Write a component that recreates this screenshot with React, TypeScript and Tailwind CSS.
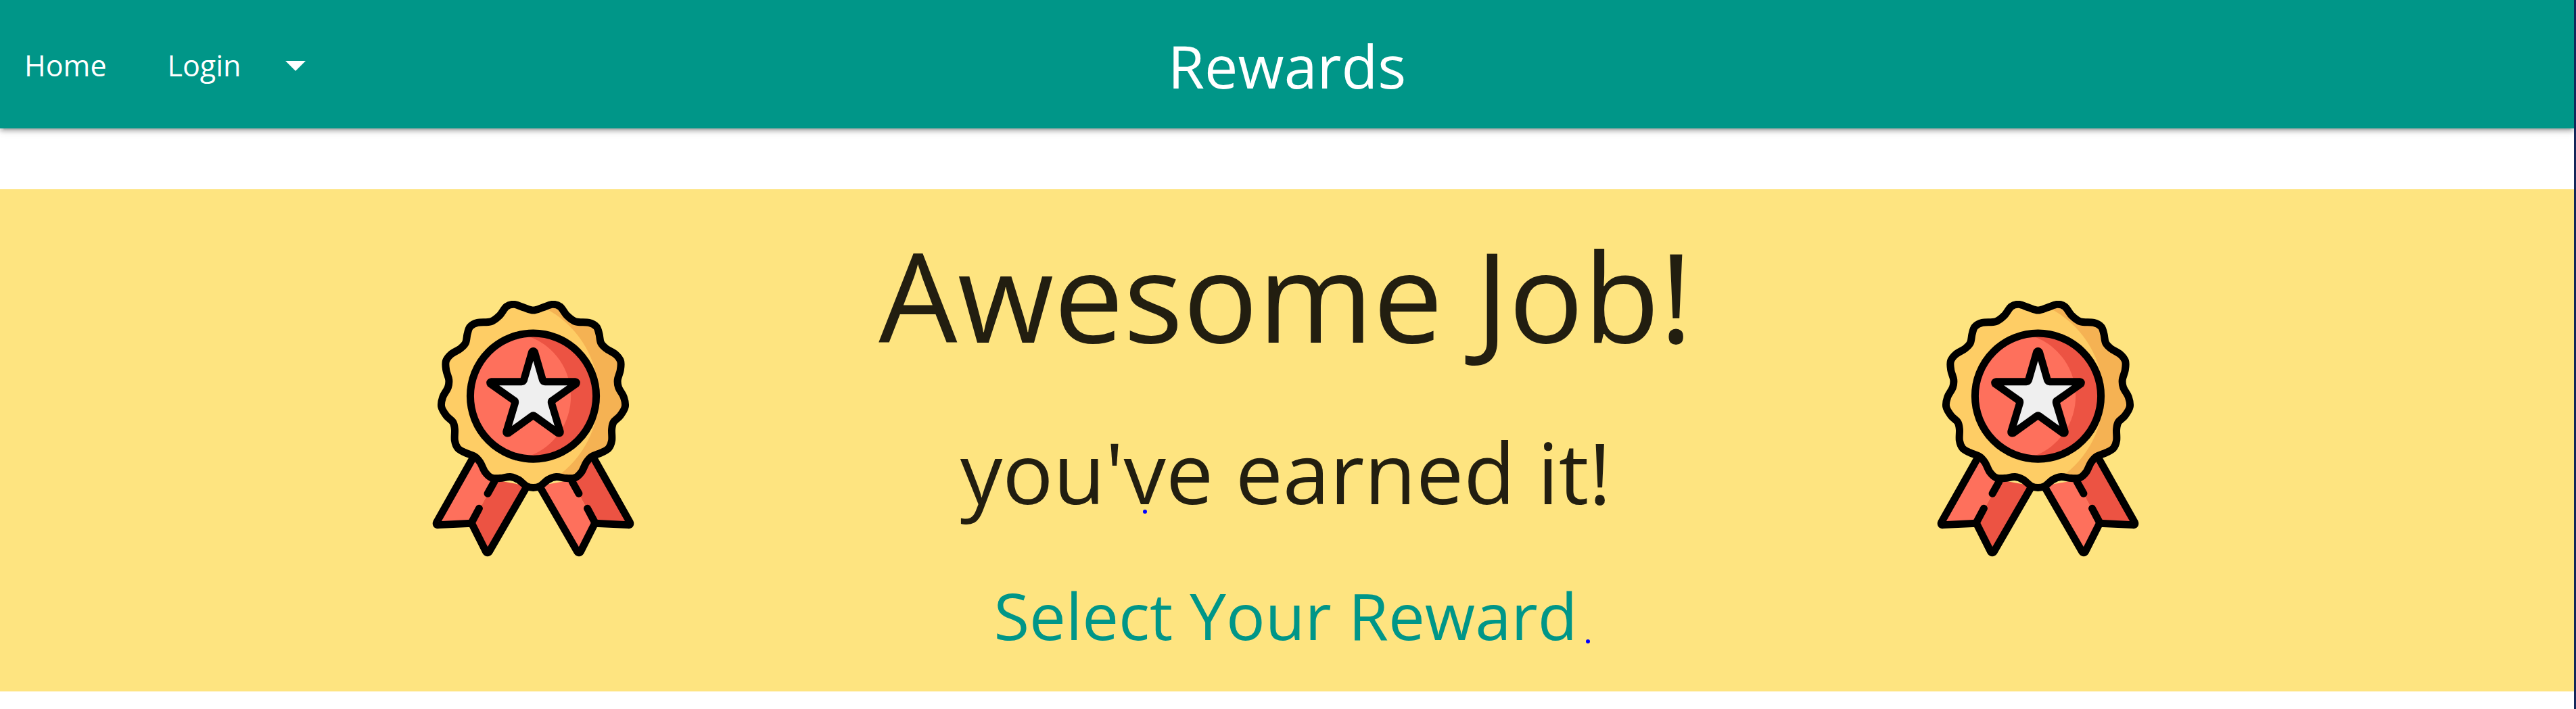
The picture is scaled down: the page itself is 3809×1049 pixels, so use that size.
type Point = [number, number];

// Right half of the rosette's scalloped edge, from top centre to bottom centre.
const edge: Point[] = [
  [503, 117], [545, 105], [588, 91], [622, 101], [652, 140], [690, 167], [750, 172], [783, 190],
  [795, 222], [803, 262], [826, 287], [868, 313], [890, 343], [889, 383], [877, 425], [881, 460],
  [904, 502], [910, 545], [888, 585], [859, 613], [851, 645], [851, 695], [837, 729], [806, 748],
  [762, 766], [738, 792], [717, 834], [688, 860], [650, 862], [605, 856], [568, 869], [533, 897],
];
const mirrored: Point[] = edge.slice(1).reverse().map(([x, y]) => [1006 - x, y]);
const outline: Point[] = [...edge, [503, 904], ...mirrored];

function smooth(points: Point[]) {
  const n = points.length;
  let d = `M${points[0][0]} ${points[0][1]}`;
  for (let i = 0; i < n; i++) {
    const a = points[(i + n - 1) % n];
    const b = points[i];
    const c = points[(i + 1) % n];
    const e = points[(i + 2) % n];
    d += `C${b[0] + (c[0] - a[0]) / 6} ${b[1] + (c[1] - a[1]) / 6} ${c[0] - (e[0] - b[0]) / 6} ${c[1] - (e[1] - b[1]) / 6} ${c[0]} ${c[1]}`;
  }
  return d + "Z";
}

const rosette = smooth(outline);

function Medal({ id }: { id: string }) {
  return (
    <svg viewBox="-65 75 1136 1136" className="size-[379px]" role="img" aria-label="Award ribbon">
      <defs>
        <clipPath id={id}>
          <path d={rosette} />
        </clipPath>
      </defs>
      <g strokeLinecap="round" strokeLinejoin="round" strokeWidth="33">
        <path d="M236 770L75 1069L230 1062L335 870Z" fill="#fe705c" />
        <path d="M335 870L230 1062L300 1192L472 895Z" fill="#ec5343" />
        <path d="M671 870L776 1062L706 1192L534 895Z" fill="#fe705c" />
        <path d="M770 770L931 1069L776 1062L671 870Z" fill="#ec5343" />
        <path
          d="M231 780L75 1057Q70 1069 82 1069L230 1062L293 1187Q300 1197 308 1187L472 903M775 780L931 1057Q936 1069 924 1069L776 1062L713 1187Q706 1197 698 1187L534 903"
          fill="none"
          stroke="#000"
        />
        <path d="M330 878L301 930M263 996L229 1060M676 878L705 930M743 996L777 1060" fill="none" stroke="#000" />
        <path d={rosette} fill="#f5b253" />
        <path d="M0 0H503L555 108A438 438 0 0 1 625 842L503 1000H0Z" fill="#fecd65" clipPath={`url(#${id})`} />
        <path d={rosette} fill="none" stroke="#000" />
        <circle cx="503" cy="498" r="279" fill="#ec5343" />
        <path d="M490 219A279 279 0 0 0 490 777V762A283 283 0 0 0 490 235Z" fill="#fe705c" />
        <circle cx="503" cy="498" r="279" fill="none" stroke="#000" />
        <path
          d="M497 303Q503 294 509 303L545 427Q548 434 555 434H689Q698 436 692 444L587 518Q582 521 584 529L622 655Q623 665 612 661L509 587Q503 582 497 587L394 661Q383 665 384 655L422 529Q424 521 419 518L314 444Q308 436 317 434H451Q458 434 461 427Z"
          fill="#efefef"
          stroke="#000"
        />
      </g>
    </svg>
  );
}

export default function App() {
  return (
    <div className="min-h-screen border-r-3 border-[#14275a] bg-white font-['Open_Sans','Noto_Sans',sans-serif] text-[#221e10]">
      <div className="overflow-hidden pb-[90px]">
        <nav className="grid h-[190px] grid-cols-[1fr_auto_1fr] items-center bg-[#009688] pt-1 text-white shadow-[0_5px_5px_rgba(0,0,0,0.14),0_7px_2px_-5px_rgba(0,0,0,0.12),0_2px_12px_rgba(0,0,0,0.2)]">
          <div className="flex items-center gap-[90px] pl-9 text-[43px] leading-[60px]">
            <a href="#home">Home</a>
            <button type="button" className="flex items-center gap-[66px]">
              Login
              <svg viewBox="0 0 30 15" className="h-[15px] w-[30px]" aria-hidden="true">
                <path d="M0 0H30L15 15Z" fill="#fff" />
              </svg>
            </button>
          </div>
          <a href="#rewards" className="text-[88px] leading-[128px]">Rewards</a>
        </nav>
      </div>
      <main className="grid grid-cols-3 bg-[#fee480] pr-59 pb-[43px] pl-58">
        <div className="flex justify-center pt-[165px]">
          <Medal id="medal-left" />
        </div>
        <div className="flex flex-col items-center whitespace-nowrap pt-9">
          <h1 className="text-[184px] leading-[240px]">Awesome Job!</h1>
          <h2 className="relative mt-13 text-[125px] leading-[180px]">
            you've earned it!
            <span className="absolute bottom-[28px] left-[270px] size-1.5 rounded-full bg-[#0000ff]" />
          </h2>
          <div className="relative mt-13 text-[96px] leading-[140px] text-[#009688]">
            <a href="#select">Select Your Reward</a>
            <span className="absolute -right-[18px] bottom-[28px] size-1.5 rounded-full bg-[#0000ff]" />
          </div>
        </div>
        <div className="flex justify-center pt-[165px]">
          <Medal id="medal-right" />
        </div>
      </main>
    </div>
  );
}
